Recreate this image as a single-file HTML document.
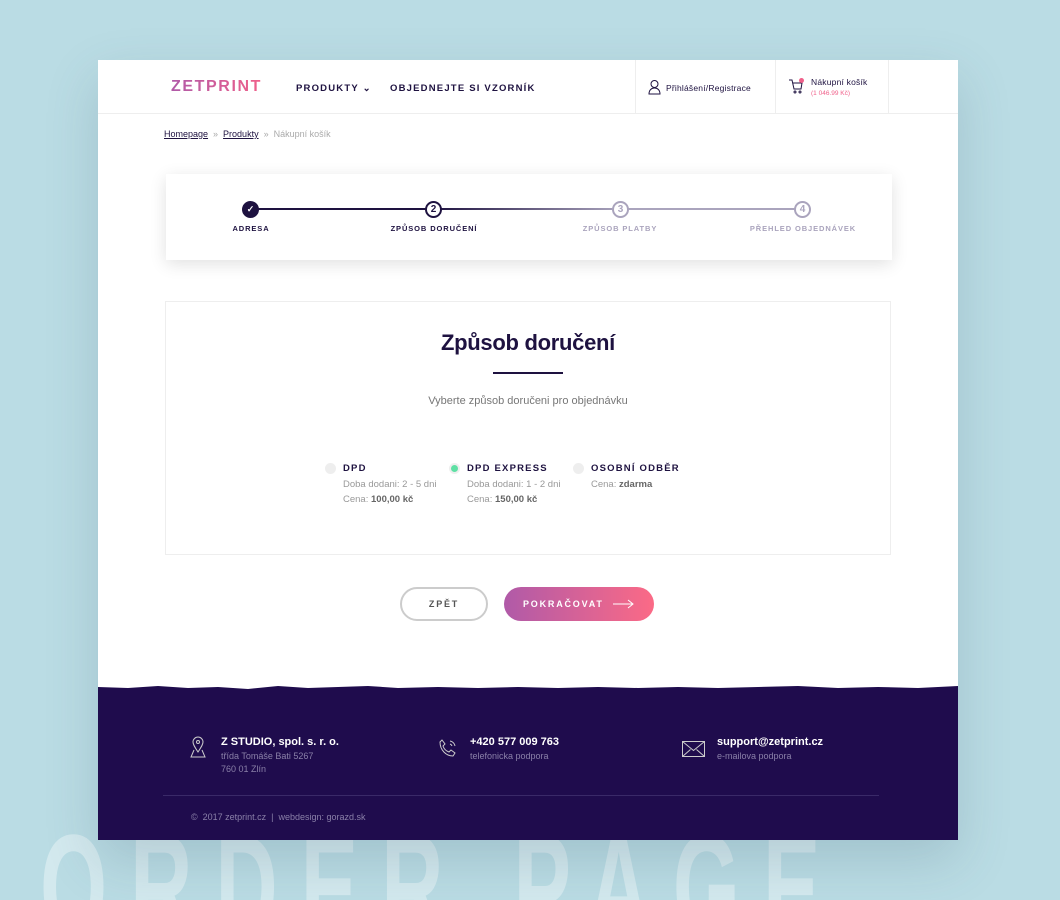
<!DOCTYPE html>
<html><head><meta charset="utf-8"><style>
*{box-sizing:border-box;margin:0;padding:0}
html,body{width:1060px;height:900px;overflow:hidden}
body{background:#badce4;font-family:"Liberation Sans",sans-serif;position:relative}
.bigw{position:absolute;left:0;top:812px;width:1060px;height:88px;overflow:hidden}
.big{position:absolute;left:40px;top:0;font-size:150px;font-weight:bold;letter-spacing:40px;color:#d3e9ee;line-height:1;transform:scaleX(.575);transform-origin:left top;white-space:nowrap}
.page{position:absolute;left:98px;top:60px;width:860px;height:780px;background:#fff;box-shadow:0 20px 50px rgba(60,90,110,.2)}
.hdr{height:54px;border-bottom:1px solid #eee;position:relative}
.logo{position:absolute;left:73px;top:18px;font-size:16px;font-weight:bold;letter-spacing:1.6px;background:linear-gradient(90deg,#b05aa8,#f0608a);-webkit-background-clip:text;color:transparent}
.nav{position:absolute;top:23px;font-size:9.5px;font-weight:bold;letter-spacing:1.2px;color:#1e1240}
.cell{position:absolute;top:0;height:54px;border-left:1px solid #eee}
.small{font-size:8.5px;color:#1e1240;letter-spacing:.2px}
.bc{position:absolute;left:66px;top:69px;font-size:9px;color:#aaa}
.bc a{color:#1e1240;text-decoration:underline}
.steps{position:absolute;left:68px;top:114px;width:726px;height:86px;background:#fff;box-shadow:0 4px 16px rgba(0,0,0,.12)}
.c{position:absolute;top:27px;width:17px;height:17px;border-radius:50%;border:2px solid #1e1240;background:#fff;font-size:10px;font-weight:bold;text-align:center;line-height:13px;color:#1e1240}
.lbl{position:absolute;top:50px;font-size:7.5px;font-weight:bold;letter-spacing:.9px;transform:translateX(-50%);white-space:nowrap}
.box{position:absolute;left:67px;top:241px;width:726px;height:254px;border:1px solid #eee}
h1{position:absolute;top:28px;width:100%;text-align:center;font-size:22px;color:#1e1240;letter-spacing:-.3px}
.opt{position:absolute;top:159px;font-size:9.5px;color:#999;line-height:15px}
.opt b.t{display:block;font-size:9.5px;color:#1e1240;letter-spacing:1.2px;margin-bottom:1px}
.opt i{position:absolute;left:-18px;top:2px;width:11px;height:11px;border-radius:50%;background:#eee}
.opt strong{color:#666}
.btn{position:absolute;top:527px;height:34px;border-radius:17px;font-size:9px;font-weight:bold;letter-spacing:1.8px;text-align:center;line-height:34px}
.foot{position:absolute;left:0;top:630px;width:860px;height:150px;background:#1f0c4d}
.fi{position:absolute;color:#fff;font-size:11px;font-weight:bold}
.fi span{display:block;font-weight:normal;color:#8a80a8;font-size:9px;line-height:13px;margin-top:2px}
</style></head><body>
<div class="bigw"><div class="big">ORDER PAGE</div></div>
<div class="page">
<div class="hdr">
<div class="logo">ZETPRINT</div>
<div class="nav" style="left:198px">PRODUKTY ⌄</div>
<div class="nav" style="left:292px">OBJEDNEJTE SI VZORNÍK</div>
<div class="cell" style="left:537px;width:140px"><svg style="position:absolute;left:12px;top:19px" width="13" height="16" viewBox="0 0 13 16" fill="none" stroke="#1e1240" stroke-width="1"><circle cx="6.5" cy="5" r="3.5"/><path d="M1 15c0-4 2.5-6 5.5-6s5.5 2 5.5 6z"/></svg><div class="small" style="position:absolute;left:30px;top:23px">Přihlášení/Registrace</div></div>
<div class="cell" style="left:677px;width:114px;border-right:1px solid #eee"><svg style="position:absolute;left:12px;top:19px" width="16" height="15" viewBox="0 0 16 15" fill="none" stroke="#1e1240"><path d="M1 1h3l2 9h7l1-6H5"/><circle cx="7" cy="13" r="1"/><circle cx="12" cy="13" r="1"/></svg><div style="position:absolute;left:23px;top:18px;width:5px;height:5px;border-radius:50%;background:#f0608a"></div><div class="small" style="position:absolute;left:35px;top:17px">Nákupní košík</div><div style="position:absolute;left:35px;top:30px;font-size:6.5px;color:#f0608a">(1 046.99 Kč)</div></div>
</div>
<div class="bc"><a>Homepage</a> &nbsp;»&nbsp; <a>Produkty</a> &nbsp;»&nbsp; Nákupní košík</div>
<div class="steps">
<div style="position:absolute;left:84px;top:34px;width:183px;height:2px;background:#1e1240"></div>
<div style="position:absolute;left:267px;top:34px;width:187px;height:2px;background:linear-gradient(90deg,#1e1240,#aaa4bd)"></div>
<div style="position:absolute;left:454px;top:34px;width:183px;height:2px;background:#aaa4bd"></div>
<div class="c" style="left:76px;background:#1e1240;color:#fff;font-size:9px">✓</div>
<div class="c" style="left:259px">2</div>
<div class="c" style="left:446px;border-color:#aaa4bd;color:#aaa4bd">3</div>
<div class="c" style="left:628px;border-color:#aaa4bd;color:#aaa4bd">4</div>
<div class="lbl" style="left:85px;color:#1e1240">ADRESA</div>
<div class="lbl" style="left:268px;color:#1e1240">ZPŮSOB DORUČENÍ</div>
<div class="lbl" style="left:454px;color:#aaa4bd">ZPŮSOB PLATBY</div>
<div class="lbl" style="left:637px;color:#aaa4bd">PŘEHLED OBJEDNÁVEK</div>
</div>
<div class="box">
<h1>Způsob doručení</h1>
<div style="position:absolute;left:327px;top:70px;width:70px;height:2px;background:#1e1240"></div>
<div style="position:absolute;top:93px;width:100%;text-align:center;font-size:11px;color:#777">Vyberte způsob doručeni pro objednávku</div>
<div class="opt" style="left:177px"><i></i><b class="t">DPD</b>Doba dodani: 2 - 5 dni<br>Cena: <strong>100,00 kč</strong></div>
<div class="opt" style="left:301px"><i><em style="position:absolute;left:2px;top:2px;width:7px;height:7px;border-radius:50%;background:#5ee0a4"></em></i><b class="t">DPD EXPRESS</b>Doba dodani: 1 - 2 dni<br>Cena: <strong>150,00 kč</strong></div>
<div class="opt" style="left:425px"><i></i><b class="t">OSOBNÍ ODBĚR</b>Cena: <strong>zdarma</strong></div>
</div>
<div class="btn" style="left:302px;width:88px;border:2px solid #ccc;color:#555;line-height:30px">ZPĚT</div>
<div class="btn" style="left:406px;width:150px;background:linear-gradient(90deg,#b05aa8,#fb6a86);color:#fff;text-align:left;padding-left:19px">POKRAČOVAT<svg style="position:absolute;left:109px;top:12px" width="21" height="10" viewBox="0 0 21 10" fill="none" stroke="#fff" stroke-width="1"><path d="M0 5h20M15 1l5 4-5 4"/></svg></div>
<div class="foot">
<svg style="position:absolute;left:0;top:-6px" width="860" height="8" viewBox="0 0 860 8" preserveAspectRatio="none"><path d="M0 3 L30 4 L60 2 L90 4 L120 3 L150 5 L180 2 L210 4 L240 3 L270 2 L300 4 L340 3 L380 4 L420 3 L460 4 L500 3 L540 4 L580 3 L620 4 L660 3 L700 2 L740 4 L780 3 L820 4 L860 2 L860 8 L0 8Z" fill="#1f0c4d"/></svg>
<svg style="position:absolute;left:92px;top:46px" width="16" height="22" viewBox="0 0 16 22" fill="none" stroke="#ccc"><path d="M8 16C4 10 3 8 3 6a5 5 0 0 1 10 0c0 2-1 4-5 10zM4 14l-3 7h14l-3-7"/><circle cx="8" cy="6" r="1.5"/></svg>
<div class="fi" style="left:123px;top:46px">Z STUDIO, spol. s. r. o.<span>třída Tomáše Bati 5267<br>760 01 Zlín</span></div>
<svg style="position:absolute;left:340px;top:48px" width="20" height="20" viewBox="0 0 20 20" fill="none" stroke="#ccc"><path d="M4 2l3 4-2 2c1 3 3 5 6 6l2-2 4 3-2 3C8 18 2 12 2 4z"/><path d="M12 3a6 6 0 0 1 5 5M12 6a3 3 0 0 1 2 2"/></svg>
<div class="fi" style="left:372px;top:46px">+420 577 009 763<span>telefonicka podpora</span></div>
<svg style="position:absolute;left:584px;top:51px" width="23" height="16" viewBox="0 0 23 16" fill="none" stroke="#ccc"><rect x=".5" y=".5" width="22" height="15"/><path d="M.5 .5l11 9 11-9M.5 15.5l8-7M22.5 15.5l-8-7"/></svg>
<div class="fi" style="left:619px;top:46px">support@zetprint.cz<span>e-mailova podpora</span></div>
<div style="position:absolute;left:65px;top:105px;width:716px;height:1px;background:#3a2a68"></div>
<div style="position:absolute;left:93px;top:122px;font-size:9px;color:#8a80a8">©&nbsp; 2017 zetprint.cz &nbsp;|&nbsp; webdesign: gorazd.sk</div>
</div>
</div>
</body></html>
